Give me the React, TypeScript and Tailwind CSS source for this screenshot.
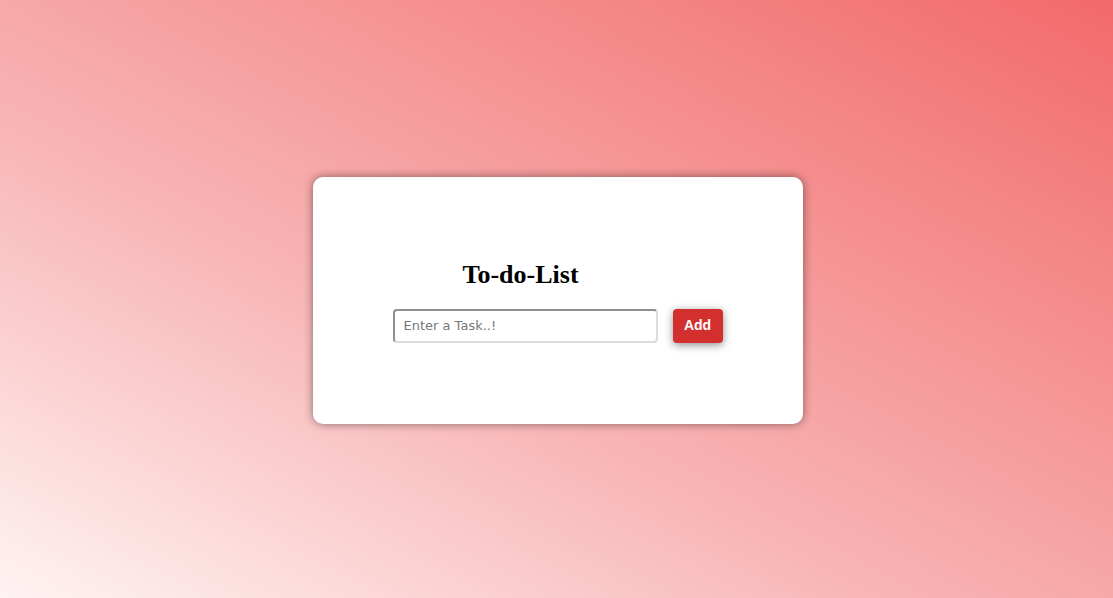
import React from "react";

export default function App() {
  return (
    <div className="min-h-screen w-full flex items-center justify-center bg-[linear-gradient(to_top_right,#fff3f3_0%,#f8b4b4_40%,#f26a6b_100%)]">
      <div className="ml-[2px] mt-[2px] w-[490px] h-[247px] bg-white rounded-[10px] shadow-[0_0_10px_rgba(0,0,0,0.45)] flex flex-col pt-[83px] pl-[80px]">
        <h1 className="pl-[70px] text-[26px] leading-[30px] font-bold text-black [font-family:'Liberation_Serif','DejaVu_Serif',serif]">
          To-do-List
        </h1>
        <div className="mt-[19px] flex items-center gap-[15px]">
          <input
            type="text"
            placeholder="Enter a Task..!"
            className="w-[265px] h-[34px] rounded-[4px] border-2 border-t-[#8f8f8f] border-l-[#8f8f8f] border-r-[#dcdcdc] border-b-[#dcdcdc] px-[9px] text-[13px] text-gray-700 placeholder:text-[#777] outline-none [font-family:'DejaVu_Sans',sans-serif]"
          />
          <button className="w-[50px] h-[34px] rounded-[4px] bg-[#d32f2f] text-white text-[14px] font-bold shadow-[0_2px_8px_rgba(0,0,0,0.45)] [font-family:'Liberation_Sans',Arial,sans-serif]">
            Add
          </button>
        </div>
      </div>
    </div>
  );
}
